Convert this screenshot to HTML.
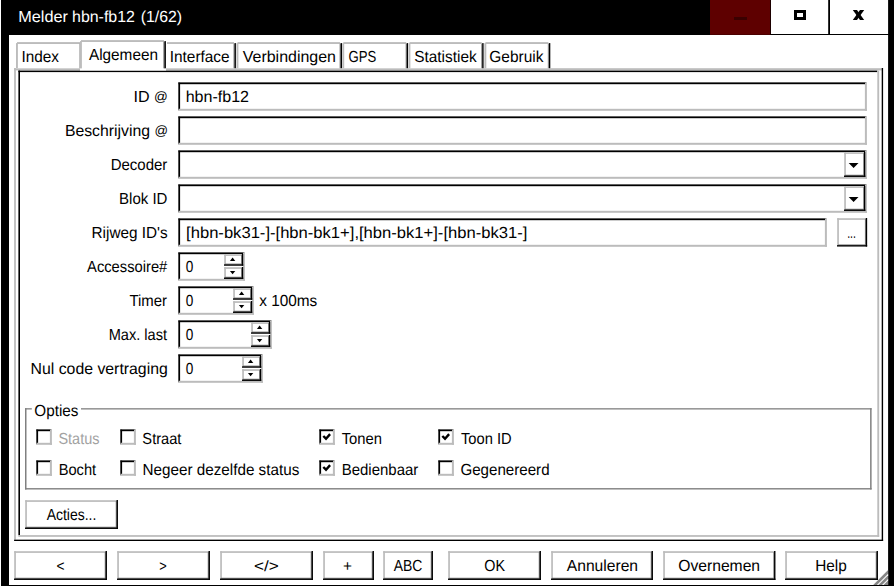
<!DOCTYPE html>
<html lang="nl"><head><meta charset="utf-8"><title>Melder hbn-fb12 (1/62)</title>
<style>html,body{margin:0;padding:0;background:#fff;overflow:hidden}body{width:894px;height:586px;font-family:'Liberation Sans', sans-serif}svg text{white-space:pre}</style>
</head><body>
<svg font-family="'Liberation Sans', sans-serif" text-rendering="geometricPrecision" width="894" height="586" viewBox="0 0 894 586" style="display:block">
<rect x="0" y="0" width="894" height="586" fill="#fff"/>
<rect x="1" y="0" width="893" height="35" fill="#000000"/>
<rect x="1" y="0" width="8" height="586" fill="#000000"/>
<rect x="888.1" y="0" width="5.9" height="586" fill="#000000"/>
<rect x="1" y="585" width="893" height="1" fill="#000000"/>
<text x="18.22" y="22" font-size="16" fill="#fff" textLength="49.73" lengthAdjust="spacingAndGlyphs">Melder</text>
<text x="72.04" y="22" font-size="16" fill="#fff" textLength="62.88" lengthAdjust="spacingAndGlyphs">hbn-fb12</text>
<text x="140.81" y="22" font-size="16" fill="#fff" textLength="41.34" lengthAdjust="spacingAndGlyphs">(1/62)</text>
<rect x="710" y="0" width="60.3" height="34.8" fill="#5e0000"/>
<rect x="734" y="17" width="13" height="3" fill="#3a0000"/>
<rect x="771" y="0" width="57.2" height="34" fill="#fff"/>
<rect x="830" y="0" width="58.1" height="34" fill="#fff"/>
<rect x="794" y="10" width="12" height="10" fill="#000000"/>
<rect x="797" y="13" width="6" height="4" fill="#fff"/>
<polygon points="852.8,10 857,10 864.2,20 860,20" fill="#000000"/>
<polygon points="860,10 864.2,10 857,20 852.8,20" fill="#000000"/>
<rect x="14.1" y="68.2" width="867.7" height="2.2" fill="#bcbcbc"/>
<rect x="14.1" y="68.2" width="1.8" height="471.5" fill="#bcbcbc"/>
<rect x="18.4" y="70.6" width="858.9" height="1.5" fill="#000000"/>
<rect x="18.4" y="70.6" width="1.6" height="464.6" fill="#000000"/>
<rect x="877.3" y="70.6" width="1.9" height="466.25" fill="#bcbcbc"/>
<rect x="18.4" y="535.1" width="860.8" height="1.75" fill="#bcbcbc"/>
<rect x="881.7" y="68" width="1.4" height="473" fill="#000000"/>
<rect x="14.1" y="539.65" width="869" height="1.35" fill="#000000"/>
<rect x="16" y="42.1" width="66" height="26.1" fill="#fff"/>
<rect x="17" y="42.1" width="63" height="1.9" fill="#bcbcbc"/>
<rect x="16" y="43.1" width="1.9" height="25.1" fill="#bcbcbc"/>
<rect x="79.4" y="43.6" width="1.4" height="24.6" fill="#9a9a9a"/>
<rect x="80.5" y="43.1" width="1.4" height="25.1" fill="#000000"/>
<text x="21.49" y="62" font-size="16" fill="#000" textLength="37.51" lengthAdjust="spacingAndGlyphs">Index</text>
<rect x="166" y="42.1" width="70" height="26.1" fill="#fff"/>
<rect x="167" y="42.1" width="67" height="1.9" fill="#bcbcbc"/>
<rect x="233.4" y="43.6" width="1.4" height="24.6" fill="#9a9a9a"/>
<rect x="234.5" y="43.1" width="1.4" height="25.1" fill="#000000"/>
<text x="169.71" y="62" font-size="16" fill="#000" textLength="59.93" lengthAdjust="spacingAndGlyphs">Interface</text>
<rect x="236.5" y="42.1" width="105.6" height="26.1" fill="#fff"/>
<rect x="237.5" y="42.1" width="102.6" height="1.9" fill="#bcbcbc"/>
<rect x="236.5" y="43.1" width="1.9" height="25.1" fill="#bcbcbc"/>
<rect x="339.5" y="43.6" width="1.4" height="24.6" fill="#9a9a9a"/>
<rect x="340.6" y="43.1" width="1.4" height="25.1" fill="#000000"/>
<text x="242.75" y="62" font-size="16" fill="#000" textLength="93.26" lengthAdjust="spacingAndGlyphs">Verbindingen</text>
<rect x="342.3" y="42.1" width="65.9" height="26.1" fill="#fff"/>
<rect x="343.3" y="42.1" width="62.9" height="1.9" fill="#bcbcbc"/>
<rect x="342.3" y="43.1" width="1.9" height="25.1" fill="#bcbcbc"/>
<rect x="405.6" y="43.6" width="1.4" height="24.6" fill="#9a9a9a"/>
<rect x="406.7" y="43.1" width="1.4" height="25.1" fill="#000000"/>
<text x="348.57" y="62" font-size="16" fill="#000" textLength="27.78" lengthAdjust="spacingAndGlyphs">GPS</text>
<rect x="408.5" y="42.1" width="75.2" height="26.1" fill="#fff"/>
<rect x="409.5" y="42.1" width="72.2" height="1.9" fill="#bcbcbc"/>
<rect x="408.5" y="43.1" width="1.9" height="25.1" fill="#bcbcbc"/>
<rect x="481.1" y="43.6" width="1.4" height="24.6" fill="#9a9a9a"/>
<rect x="482.2" y="43.1" width="1.4" height="25.1" fill="#000000"/>
<text x="414.22" y="62" font-size="16" fill="#000" textLength="62.51" lengthAdjust="spacingAndGlyphs">Statistiek</text>
<rect x="484.4" y="42.1" width="66" height="26.1" fill="#fff"/>
<rect x="485.4" y="42.1" width="63" height="1.9" fill="#bcbcbc"/>
<rect x="484.4" y="43.1" width="1.9" height="25.1" fill="#bcbcbc"/>
<rect x="547.8" y="43.6" width="1.4" height="24.6" fill="#9a9a9a"/>
<rect x="548.9" y="43.1" width="1.4" height="25.1" fill="#000000"/>
<text x="489.35" y="62" font-size="16" fill="#000" textLength="54.10" lengthAdjust="spacingAndGlyphs">Gebruik</text>
<rect x="80" y="40.1" width="86" height="30.4" fill="#fff"/>
<rect x="81" y="40.1" width="83" height="1.9" fill="#bcbcbc"/>
<rect x="80" y="41.1" width="1.9" height="27.3" fill="#bcbcbc"/>
<rect x="163.4" y="41.6" width="1.4" height="26.7" fill="#6e6e6e"/>
<rect x="164.5" y="41.1" width="1.4" height="27.2" fill="#000000"/>
<text x="88.95" y="60" font-size="16" fill="#000" textLength="69.03" lengthAdjust="spacingAndGlyphs">Algemeen</text>
<text x="133.55" y="102" font-size="16" fill="#000" textLength="34.33" lengthAdjust="spacingAndGlyphs">ID <tspan font-size="13.5" dy="-1.4">@</tspan></text>
<text x="64.90" y="136" font-size="16" fill="#000" textLength="103.10" lengthAdjust="spacingAndGlyphs">Beschrijving <tspan font-size="13.5" dy="-1.4">@</tspan></text>
<text x="110.72" y="170" font-size="16" fill="#000" textLength="56.64" lengthAdjust="spacingAndGlyphs">Decoder</text>
<text x="119.05" y="204" font-size="16" fill="#000" textLength="48.36" lengthAdjust="spacingAndGlyphs">Blok ID</text>
<text x="91.54" y="238" font-size="16" fill="#000" textLength="76.13" lengthAdjust="spacingAndGlyphs">Rijweg ID's</text>
<text x="87.07" y="272" font-size="16" fill="#000" textLength="80.21" lengthAdjust="spacingAndGlyphs">Accessoire#</text>
<text x="129.47" y="306" font-size="16" fill="#000" textLength="37.60" lengthAdjust="spacingAndGlyphs">Timer</text>
<text x="108.71" y="340" font-size="16" fill="#000" textLength="58.37" lengthAdjust="spacingAndGlyphs">Max. last</text>
<text x="30.54" y="374" font-size="16" fill="#000" textLength="137.27" lengthAdjust="spacingAndGlyphs">Nul code vertraging</text>
<rect x="178" y="82" width="689" height="29" fill="#fff"/>
<rect x="178" y="108.8" width="689" height="2" fill="#bcbcbc"/>
<rect x="864.9" y="82" width="2" height="28.8" fill="#bcbcbc"/>
<rect x="178" y="82" width="688" height="1" fill="#8a8a8a"/>
<rect x="178" y="82" width="1" height="28" fill="#8a8a8a"/>
<rect x="178.6" y="82.7" width="686.4" height="1.5" fill="#000000"/>
<rect x="178.6" y="82.7" width="1.5" height="26.1" fill="#000000"/>
<text x="185.69" y="102" font-size="16" fill="#000" textLength="63.35" lengthAdjust="spacingAndGlyphs">hbn-fb12</text>
<rect x="178" y="116" width="689" height="29" fill="#fff"/>
<rect x="178" y="142.8" width="689" height="2" fill="#bcbcbc"/>
<rect x="864.9" y="116" width="2" height="28.8" fill="#bcbcbc"/>
<rect x="178" y="116" width="688" height="1" fill="#8a8a8a"/>
<rect x="178" y="116" width="1" height="28" fill="#8a8a8a"/>
<rect x="178.6" y="116.7" width="686.4" height="1.5" fill="#000000"/>
<rect x="178.6" y="116.7" width="1.5" height="26.1" fill="#000000"/>
<rect x="178" y="150" width="689" height="29" fill="#fff"/>
<rect x="178" y="176.8" width="689" height="2" fill="#bcbcbc"/>
<rect x="864.9" y="150" width="2" height="28.8" fill="#bcbcbc"/>
<rect x="178" y="150" width="688" height="1" fill="#8a8a8a"/>
<rect x="178" y="150" width="1" height="28" fill="#8a8a8a"/>
<rect x="178.6" y="150.7" width="686.4" height="1.5" fill="#000000"/>
<rect x="178.6" y="150.7" width="1.5" height="26.1" fill="#000000"/>
<rect x="844" y="152" width="21.4" height="25" fill="#fff"/>
<rect x="844.2" y="152.2" width="20.2" height="1.7" fill="#bcbcbc"/>
<rect x="844.2" y="152.2" width="1.7" height="23.8" fill="#bcbcbc"/>
<rect x="863.1" y="153" width="1.3" height="23" fill="#8f8f8f"/>
<rect x="845" y="174.7" width="19.4" height="1.3" fill="#8f8f8f"/>
<rect x="863.95" y="152" width="1.4" height="24.95" fill="#000000"/>
<rect x="844" y="175.55" width="21.35" height="1.4" fill="#000000"/>
<polygon points="848.7,163 858.5,163 853.6,168" fill="#000000"/>
<rect x="178" y="184" width="689" height="29" fill="#fff"/>
<rect x="178" y="210.8" width="689" height="2" fill="#bcbcbc"/>
<rect x="864.9" y="184" width="2" height="28.8" fill="#bcbcbc"/>
<rect x="178" y="184" width="688" height="1" fill="#8a8a8a"/>
<rect x="178" y="184" width="1" height="28" fill="#8a8a8a"/>
<rect x="178.6" y="184.7" width="686.4" height="1.5" fill="#000000"/>
<rect x="178.6" y="184.7" width="1.5" height="26.1" fill="#000000"/>
<rect x="844" y="186" width="21.4" height="25" fill="#fff"/>
<rect x="844.2" y="186.2" width="20.2" height="1.7" fill="#bcbcbc"/>
<rect x="844.2" y="186.2" width="1.7" height="23.8" fill="#bcbcbc"/>
<rect x="863.1" y="187" width="1.3" height="23" fill="#8f8f8f"/>
<rect x="845" y="208.7" width="19.4" height="1.3" fill="#8f8f8f"/>
<rect x="863.95" y="186" width="1.4" height="24.95" fill="#000000"/>
<rect x="844" y="209.55" width="21.35" height="1.4" fill="#000000"/>
<polygon points="848.7,197 858.5,197 853.6,202" fill="#000000"/>
<rect x="178" y="218" width="649" height="29" fill="#fff"/>
<rect x="178" y="244.8" width="649" height="2" fill="#bcbcbc"/>
<rect x="824.9" y="218" width="2" height="28.8" fill="#bcbcbc"/>
<rect x="178" y="218" width="648" height="1" fill="#8a8a8a"/>
<rect x="178" y="218" width="1" height="28" fill="#8a8a8a"/>
<rect x="178.6" y="218.7" width="646.4" height="1.5" fill="#000000"/>
<rect x="178.6" y="218.7" width="1.5" height="26.1" fill="#000000"/>
<text x="186.09" y="238" font-size="16" fill="#000" textLength="341.25" lengthAdjust="spacingAndGlyphs">[hbn-bk31-]-[hbn-bk1+],[hbn-bk1+]-[hbn-bk31-]</text>
<rect x="837" y="218" width="30.2" height="28.6" fill="#fff"/>
<rect x="837.2" y="218.2" width="29" height="1.7" fill="#bcbcbc"/>
<rect x="837.2" y="218.2" width="1.7" height="27.4" fill="#bcbcbc"/>
<rect x="864.9" y="219" width="1.3" height="26.6" fill="#8f8f8f"/>
<rect x="838" y="244.3" width="28.2" height="1.3" fill="#8f8f8f"/>
<rect x="865.75" y="218" width="1.4" height="28.55" fill="#000000"/>
<rect x="837" y="245.15" width="30.15" height="1.4" fill="#000000"/>
<text x="847.14" y="237.6" font-size="16" fill="#000" textLength="8.84" lengthAdjust="spacingAndGlyphs">...</text>
<rect x="178" y="252" width="67" height="29" fill="#fff"/>
<rect x="178" y="278.8" width="67" height="2" fill="#bcbcbc"/>
<rect x="242.9" y="252" width="2" height="28.8" fill="#bcbcbc"/>
<rect x="178" y="252" width="66" height="1" fill="#8a8a8a"/>
<rect x="178" y="252" width="1" height="28" fill="#8a8a8a"/>
<rect x="178.6" y="252.7" width="64.4" height="1.5" fill="#000000"/>
<rect x="178.6" y="252.7" width="1.5" height="26.1" fill="#000000"/>
<text x="185.81" y="272" font-size="16" fill="#000" textLength="7.56" lengthAdjust="spacingAndGlyphs">0</text>
<rect x="224" y="254" width="19.3" height="11.8" fill="#fff"/>
<rect x="224.2" y="254.2" width="18.1" height="1.7" fill="#bcbcbc"/>
<rect x="224.2" y="254.2" width="1.7" height="10.6" fill="#bcbcbc"/>
<rect x="241" y="255" width="1.3" height="9.8" fill="#8f8f8f"/>
<rect x="225" y="263.5" width="17.3" height="1.3" fill="#8f8f8f"/>
<rect x="241.85" y="254" width="1.4" height="11.75" fill="#000000"/>
<rect x="224" y="264.35" width="19.25" height="1.4" fill="#000000"/>
<rect x="224" y="267" width="19.3" height="12" fill="#fff"/>
<rect x="224.2" y="267.2" width="18.1" height="1.7" fill="#bcbcbc"/>
<rect x="224.2" y="267.2" width="1.7" height="10.8" fill="#bcbcbc"/>
<rect x="241" y="268" width="1.3" height="10" fill="#8f8f8f"/>
<rect x="225" y="276.7" width="17.3" height="1.3" fill="#8f8f8f"/>
<rect x="241.85" y="267" width="1.4" height="11.95" fill="#000000"/>
<rect x="224" y="277.55" width="19.25" height="1.4" fill="#000000"/>
<polygon points="229.9,261.1 235.3,261.1 232.6,257.6" fill="#000000"/>
<polygon points="229.9,270.9 235.3,270.9 232.6,274.3" fill="#000000"/>
<rect x="178" y="286" width="76" height="29" fill="#fff"/>
<rect x="178" y="312.8" width="76" height="2" fill="#bcbcbc"/>
<rect x="251.9" y="286" width="2" height="28.8" fill="#bcbcbc"/>
<rect x="178" y="286" width="75" height="1" fill="#8a8a8a"/>
<rect x="178" y="286" width="1" height="28" fill="#8a8a8a"/>
<rect x="178.6" y="286.7" width="73.4" height="1.5" fill="#000000"/>
<rect x="178.6" y="286.7" width="1.5" height="26.1" fill="#000000"/>
<text x="185.81" y="306" font-size="16" fill="#000" textLength="7.56" lengthAdjust="spacingAndGlyphs">0</text>
<rect x="233" y="288" width="19.3" height="11.8" fill="#fff"/>
<rect x="233.2" y="288.2" width="18.1" height="1.7" fill="#bcbcbc"/>
<rect x="233.2" y="288.2" width="1.7" height="10.6" fill="#bcbcbc"/>
<rect x="250" y="289" width="1.3" height="9.8" fill="#8f8f8f"/>
<rect x="234" y="297.5" width="17.3" height="1.3" fill="#8f8f8f"/>
<rect x="250.85" y="288" width="1.4" height="11.75" fill="#000000"/>
<rect x="233" y="298.35" width="19.25" height="1.4" fill="#000000"/>
<rect x="233" y="301" width="19.3" height="12" fill="#fff"/>
<rect x="233.2" y="301.2" width="18.1" height="1.7" fill="#bcbcbc"/>
<rect x="233.2" y="301.2" width="1.7" height="10.8" fill="#bcbcbc"/>
<rect x="250" y="302" width="1.3" height="10" fill="#8f8f8f"/>
<rect x="234" y="310.7" width="17.3" height="1.3" fill="#8f8f8f"/>
<rect x="250.85" y="301" width="1.4" height="11.95" fill="#000000"/>
<rect x="233" y="311.55" width="19.25" height="1.4" fill="#000000"/>
<polygon points="238.9,295.1 244.3,295.1 241.6,291.6" fill="#000000"/>
<polygon points="238.9,304.9 244.3,304.9 241.6,308.3" fill="#000000"/>
<rect x="178" y="320" width="94" height="29" fill="#fff"/>
<rect x="178" y="346.8" width="94" height="2" fill="#bcbcbc"/>
<rect x="269.9" y="320" width="2" height="28.8" fill="#bcbcbc"/>
<rect x="178" y="320" width="93" height="1" fill="#8a8a8a"/>
<rect x="178" y="320" width="1" height="28" fill="#8a8a8a"/>
<rect x="178.6" y="320.7" width="91.4" height="1.5" fill="#000000"/>
<rect x="178.6" y="320.7" width="1.5" height="26.1" fill="#000000"/>
<text x="185.81" y="340" font-size="16" fill="#000" textLength="7.56" lengthAdjust="spacingAndGlyphs">0</text>
<rect x="251" y="322" width="19.3" height="11.8" fill="#fff"/>
<rect x="251.2" y="322.2" width="18.1" height="1.7" fill="#bcbcbc"/>
<rect x="251.2" y="322.2" width="1.7" height="10.6" fill="#bcbcbc"/>
<rect x="268" y="323" width="1.3" height="9.8" fill="#8f8f8f"/>
<rect x="252" y="331.5" width="17.3" height="1.3" fill="#8f8f8f"/>
<rect x="268.85" y="322" width="1.4" height="11.75" fill="#000000"/>
<rect x="251" y="332.35" width="19.25" height="1.4" fill="#000000"/>
<rect x="251" y="335" width="19.3" height="12" fill="#fff"/>
<rect x="251.2" y="335.2" width="18.1" height="1.7" fill="#bcbcbc"/>
<rect x="251.2" y="335.2" width="1.7" height="10.8" fill="#bcbcbc"/>
<rect x="268" y="336" width="1.3" height="10" fill="#8f8f8f"/>
<rect x="252" y="344.7" width="17.3" height="1.3" fill="#8f8f8f"/>
<rect x="268.85" y="335" width="1.4" height="11.95" fill="#000000"/>
<rect x="251" y="345.55" width="19.25" height="1.4" fill="#000000"/>
<polygon points="256.9,329.1 262.3,329.1 259.6,325.6" fill="#000000"/>
<polygon points="256.9,338.9 262.3,338.9 259.6,342.3" fill="#000000"/>
<rect x="178" y="354" width="85" height="29" fill="#fff"/>
<rect x="178" y="380.8" width="85" height="2" fill="#bcbcbc"/>
<rect x="260.9" y="354" width="2" height="28.8" fill="#bcbcbc"/>
<rect x="178" y="354" width="84" height="1" fill="#8a8a8a"/>
<rect x="178" y="354" width="1" height="28" fill="#8a8a8a"/>
<rect x="178.6" y="354.7" width="82.4" height="1.5" fill="#000000"/>
<rect x="178.6" y="354.7" width="1.5" height="26.1" fill="#000000"/>
<text x="185.81" y="374" font-size="16" fill="#000" textLength="7.56" lengthAdjust="spacingAndGlyphs">0</text>
<rect x="242" y="356" width="19.3" height="11.8" fill="#fff"/>
<rect x="242.2" y="356.2" width="18.1" height="1.7" fill="#bcbcbc"/>
<rect x="242.2" y="356.2" width="1.7" height="10.6" fill="#bcbcbc"/>
<rect x="259" y="357" width="1.3" height="9.8" fill="#8f8f8f"/>
<rect x="243" y="365.5" width="17.3" height="1.3" fill="#8f8f8f"/>
<rect x="259.85" y="356" width="1.4" height="11.75" fill="#000000"/>
<rect x="242" y="366.35" width="19.25" height="1.4" fill="#000000"/>
<rect x="242" y="369" width="19.3" height="12" fill="#fff"/>
<rect x="242.2" y="369.2" width="18.1" height="1.7" fill="#bcbcbc"/>
<rect x="242.2" y="369.2" width="1.7" height="10.8" fill="#bcbcbc"/>
<rect x="259" y="370" width="1.3" height="10" fill="#8f8f8f"/>
<rect x="243" y="378.7" width="17.3" height="1.3" fill="#8f8f8f"/>
<rect x="259.85" y="369" width="1.4" height="11.95" fill="#000000"/>
<rect x="242" y="379.55" width="19.25" height="1.4" fill="#000000"/>
<polygon points="247.9,363.1 253.3,363.1 250.6,359.6" fill="#000000"/>
<polygon points="247.9,372.9 253.3,372.9 250.6,376.3" fill="#000000"/>
<text x="259.19" y="306" font-size="16" fill="#000" textLength="58.06" lengthAdjust="spacingAndGlyphs">x 100ms</text>
<rect x="25" y="408.2" width="6.8" height="1.3" fill="#808080"/>
<rect x="81" y="408.2" width="790.6" height="1.3" fill="#808080"/>
<rect x="25" y="408.2" width="1.5" height="81.3" fill="#808080"/>
<rect x="870.1" y="408.2" width="1.5" height="81.3" fill="#808080"/>
<rect x="25" y="488.1" width="846.6" height="1.4" fill="#808080"/>
<text x="34.36" y="416" font-size="16" fill="#000" textLength="44.11" lengthAdjust="spacingAndGlyphs">Opties</text>
<rect x="36" y="429" width="16" height="16" fill="#fff"/>
<rect x="36" y="442.8" width="16" height="2" fill="#bcbcbc"/>
<rect x="49.9" y="429" width="2" height="15.8" fill="#bcbcbc"/>
<rect x="36" y="429" width="15" height="1" fill="#8a8a8a"/>
<rect x="36" y="429" width="1" height="15" fill="#8a8a8a"/>
<rect x="36.6" y="429.7" width="13.4" height="1.5" fill="#000000"/>
<rect x="36.6" y="429.7" width="1.5" height="13.1" fill="#000000"/>
<text x="58.43" y="444" font-size="16" fill="#a2a2a2" textLength="41.08" lengthAdjust="spacingAndGlyphs">Status</text>
<rect x="120" y="429" width="16" height="16" fill="#fff"/>
<rect x="120" y="442.8" width="16" height="2" fill="#bcbcbc"/>
<rect x="133.9" y="429" width="2" height="15.8" fill="#bcbcbc"/>
<rect x="120" y="429" width="15" height="1" fill="#8a8a8a"/>
<rect x="120" y="429" width="1" height="15" fill="#8a8a8a"/>
<rect x="120.6" y="429.7" width="13.4" height="1.5" fill="#000000"/>
<rect x="120.6" y="429.7" width="1.5" height="13.1" fill="#000000"/>
<text x="142.37" y="444" font-size="16" fill="#000" textLength="39.07" lengthAdjust="spacingAndGlyphs">Straat</text>
<rect x="319" y="429" width="16" height="16" fill="#fff"/>
<rect x="319" y="442.8" width="16" height="2" fill="#bcbcbc"/>
<rect x="332.9" y="429" width="2" height="15.8" fill="#bcbcbc"/>
<rect x="319" y="429" width="15" height="1" fill="#8a8a8a"/>
<rect x="319" y="429" width="1" height="15" fill="#8a8a8a"/>
<rect x="319.6" y="429.7" width="13.4" height="1.5" fill="#000000"/>
<rect x="319.6" y="429.7" width="1.5" height="13.1" fill="#000000"/>
<path d="M323.3 436 L326 438.7 L330.1 434.1" stroke="#000" stroke-width="2.4" fill="none" stroke-linejoin="miter"/>
<text x="341.66" y="444" font-size="16" fill="#000" textLength="40.28" lengthAdjust="spacingAndGlyphs">Tonen</text>
<rect x="438" y="429" width="16" height="16" fill="#fff"/>
<rect x="438" y="442.8" width="16" height="2" fill="#bcbcbc"/>
<rect x="451.9" y="429" width="2" height="15.8" fill="#bcbcbc"/>
<rect x="438" y="429" width="15" height="1" fill="#8a8a8a"/>
<rect x="438" y="429" width="1" height="15" fill="#8a8a8a"/>
<rect x="438.6" y="429.7" width="13.4" height="1.5" fill="#000000"/>
<rect x="438.6" y="429.7" width="1.5" height="13.1" fill="#000000"/>
<path d="M442.3 436 L445 438.7 L449.1 434.1" stroke="#000" stroke-width="2.4" fill="none" stroke-linejoin="miter"/>
<text x="460.97" y="444" font-size="16" fill="#000" textLength="50.64" lengthAdjust="spacingAndGlyphs">Toon ID</text>
<rect x="36" y="460" width="16" height="16" fill="#fff"/>
<rect x="36" y="473.8" width="16" height="2" fill="#bcbcbc"/>
<rect x="49.9" y="460" width="2" height="15.8" fill="#bcbcbc"/>
<rect x="36" y="460" width="15" height="1" fill="#8a8a8a"/>
<rect x="36" y="460" width="1" height="15" fill="#8a8a8a"/>
<rect x="36.6" y="460.7" width="13.4" height="1.5" fill="#000000"/>
<rect x="36.6" y="460.7" width="1.5" height="13.1" fill="#000000"/>
<text x="58.71" y="475" font-size="16" fill="#000" textLength="37.39" lengthAdjust="spacingAndGlyphs">Bocht</text>
<rect x="120" y="460" width="16" height="16" fill="#fff"/>
<rect x="120" y="473.8" width="16" height="2" fill="#bcbcbc"/>
<rect x="133.9" y="460" width="2" height="15.8" fill="#bcbcbc"/>
<rect x="120" y="460" width="15" height="1" fill="#8a8a8a"/>
<rect x="120" y="460" width="1" height="15" fill="#8a8a8a"/>
<rect x="120.6" y="460.7" width="13.4" height="1.5" fill="#000000"/>
<rect x="120.6" y="460.7" width="1.5" height="13.1" fill="#000000"/>
<text x="142.49" y="475" font-size="16" fill="#000" textLength="156.81" lengthAdjust="spacingAndGlyphs">Negeer dezelfde status</text>
<rect x="319" y="460" width="16" height="16" fill="#fff"/>
<rect x="319" y="473.8" width="16" height="2" fill="#bcbcbc"/>
<rect x="332.9" y="460" width="2" height="15.8" fill="#bcbcbc"/>
<rect x="319" y="460" width="15" height="1" fill="#8a8a8a"/>
<rect x="319" y="460" width="1" height="15" fill="#8a8a8a"/>
<rect x="319.6" y="460.7" width="13.4" height="1.5" fill="#000000"/>
<rect x="319.6" y="460.7" width="1.5" height="13.1" fill="#000000"/>
<path d="M323.3 467 L326 469.7 L330.1 465.1" stroke="#000" stroke-width="2.4" fill="none" stroke-linejoin="miter"/>
<text x="341.76" y="475" font-size="16" fill="#000" textLength="76.49" lengthAdjust="spacingAndGlyphs">Bedienbaar</text>
<rect x="438" y="460" width="16" height="16" fill="#fff"/>
<rect x="438" y="473.8" width="16" height="2" fill="#bcbcbc"/>
<rect x="451.9" y="460" width="2" height="15.8" fill="#bcbcbc"/>
<rect x="438" y="460" width="15" height="1" fill="#8a8a8a"/>
<rect x="438" y="460" width="1" height="15" fill="#8a8a8a"/>
<rect x="438.6" y="460.7" width="13.4" height="1.5" fill="#000000"/>
<rect x="438.6" y="460.7" width="1.5" height="13.1" fill="#000000"/>
<text x="460.45" y="475" font-size="16" fill="#000" textLength="89.12" lengthAdjust="spacingAndGlyphs">Gegenereerd</text>
<rect x="25" y="500" width="93" height="29" fill="#fff"/>
<rect x="25.2" y="500.2" width="91.8" height="1.7" fill="#bcbcbc"/>
<rect x="25.2" y="500.2" width="1.7" height="27.8" fill="#bcbcbc"/>
<rect x="115.7" y="501" width="1.3" height="27" fill="#8f8f8f"/>
<rect x="26" y="526.7" width="91" height="1.3" fill="#8f8f8f"/>
<rect x="116.55" y="500" width="1.4" height="28.95" fill="#000000"/>
<rect x="25" y="527.55" width="92.95" height="1.4" fill="#000000"/>
<text x="46.65" y="520" font-size="16" fill="#000" textLength="49.72" lengthAdjust="spacingAndGlyphs">Acties...</text>
<rect x="14" y="551" width="93" height="29" fill="#fff"/>
<rect x="14.2" y="551.2" width="91.8" height="1.7" fill="#bcbcbc"/>
<rect x="14.2" y="551.2" width="1.7" height="27.8" fill="#bcbcbc"/>
<rect x="104.7" y="552" width="1.3" height="27" fill="#8f8f8f"/>
<rect x="15" y="577.7" width="91" height="1.3" fill="#8f8f8f"/>
<rect x="105.55" y="551" width="1.4" height="28.95" fill="#000000"/>
<rect x="14" y="578.55" width="92.95" height="1.4" fill="#000000"/>
<text x="56.49" y="571.2" font-size="15" fill="#000" textLength="8.04" lengthAdjust="spacingAndGlyphs">&lt;</text>
<rect x="117" y="551" width="93" height="29" fill="#fff"/>
<rect x="117.2" y="551.2" width="91.8" height="1.7" fill="#bcbcbc"/>
<rect x="117.2" y="551.2" width="1.7" height="27.8" fill="#bcbcbc"/>
<rect x="207.7" y="552" width="1.3" height="27" fill="#8f8f8f"/>
<rect x="118" y="577.7" width="91" height="1.3" fill="#8f8f8f"/>
<rect x="208.55" y="551" width="1.4" height="28.95" fill="#000000"/>
<rect x="117" y="578.55" width="92.95" height="1.4" fill="#000000"/>
<text x="159.34" y="571.2" font-size="15" fill="#000" textLength="7.48" lengthAdjust="spacingAndGlyphs">&gt;</text>
<rect x="220" y="551" width="93" height="29" fill="#fff"/>
<rect x="220.2" y="551.2" width="91.8" height="1.7" fill="#bcbcbc"/>
<rect x="220.2" y="551.2" width="1.7" height="27.8" fill="#bcbcbc"/>
<rect x="310.7" y="552" width="1.3" height="27" fill="#8f8f8f"/>
<rect x="221" y="577.7" width="91" height="1.3" fill="#8f8f8f"/>
<rect x="311.55" y="551" width="1.4" height="28.95" fill="#000000"/>
<rect x="220" y="578.55" width="92.95" height="1.4" fill="#000000"/>
<text x="254.07" y="571" font-size="15" fill="#000" textLength="24.75" lengthAdjust="spacingAndGlyphs">&lt;/&gt;</text>
<rect x="323" y="551" width="51" height="29" fill="#fff"/>
<rect x="323.2" y="551.2" width="49.8" height="1.7" fill="#bcbcbc"/>
<rect x="323.2" y="551.2" width="1.7" height="27.8" fill="#bcbcbc"/>
<rect x="371.7" y="552" width="1.3" height="27" fill="#8f8f8f"/>
<rect x="324" y="577.7" width="49" height="1.3" fill="#8f8f8f"/>
<rect x="372.55" y="551" width="1.4" height="28.95" fill="#000000"/>
<rect x="323" y="578.55" width="50.95" height="1.4" fill="#000000"/>
<text x="342.90" y="571.2" font-size="15" fill="#000" textLength="8.97" lengthAdjust="spacingAndGlyphs">+</text>
<rect x="383" y="551" width="50" height="29" fill="#fff"/>
<rect x="383.2" y="551.2" width="48.8" height="1.7" fill="#bcbcbc"/>
<rect x="383.2" y="551.2" width="1.7" height="27.8" fill="#bcbcbc"/>
<rect x="430.7" y="552" width="1.3" height="27" fill="#8f8f8f"/>
<rect x="384" y="577.7" width="48" height="1.3" fill="#8f8f8f"/>
<rect x="431.55" y="551" width="1.4" height="28.95" fill="#000000"/>
<rect x="383" y="578.55" width="49.95" height="1.4" fill="#000000"/>
<text x="393.81" y="571" font-size="16" fill="#000" textLength="28.62" lengthAdjust="spacingAndGlyphs">ABC</text>
<rect x="448" y="551" width="93" height="29" fill="#fff"/>
<rect x="448.2" y="551.2" width="91.8" height="1.7" fill="#bcbcbc"/>
<rect x="448.2" y="551.2" width="1.7" height="27.8" fill="#bcbcbc"/>
<rect x="538.7" y="552" width="1.3" height="27" fill="#8f8f8f"/>
<rect x="449" y="577.7" width="91" height="1.3" fill="#8f8f8f"/>
<rect x="539.55" y="551" width="1.4" height="28.95" fill="#000000"/>
<rect x="448" y="578.55" width="92.95" height="1.4" fill="#000000"/>
<text x="484.37" y="571" font-size="16" fill="#000" textLength="20.73" lengthAdjust="spacingAndGlyphs">OK</text>
<rect x="551" y="551" width="102" height="29" fill="#fff"/>
<rect x="551.2" y="551.2" width="100.8" height="1.7" fill="#bcbcbc"/>
<rect x="551.2" y="551.2" width="1.7" height="27.8" fill="#bcbcbc"/>
<rect x="650.7" y="552" width="1.3" height="27" fill="#8f8f8f"/>
<rect x="552" y="577.7" width="100" height="1.3" fill="#8f8f8f"/>
<rect x="651.55" y="551" width="1.4" height="28.95" fill="#000000"/>
<rect x="551" y="578.55" width="101.95" height="1.4" fill="#000000"/>
<text x="566.78" y="571" font-size="16" fill="#000" textLength="71.26" lengthAdjust="spacingAndGlyphs">Annuleren</text>
<rect x="663" y="551" width="112.5" height="29" fill="#fff"/>
<rect x="663.2" y="551.2" width="111.3" height="1.7" fill="#bcbcbc"/>
<rect x="663.2" y="551.2" width="1.7" height="27.8" fill="#bcbcbc"/>
<rect x="773.2" y="552" width="1.3" height="27" fill="#8f8f8f"/>
<rect x="664" y="577.7" width="110.5" height="1.3" fill="#8f8f8f"/>
<rect x="774.05" y="551" width="1.4" height="28.95" fill="#000000"/>
<rect x="663" y="578.55" width="112.45" height="1.4" fill="#000000"/>
<text x="678.23" y="571" font-size="16" fill="#000" textLength="81.87" lengthAdjust="spacingAndGlyphs">Overnemen</text>
<rect x="785" y="551" width="93" height="29" fill="#fff"/>
<rect x="785.2" y="551.2" width="91.8" height="1.7" fill="#bcbcbc"/>
<rect x="785.2" y="551.2" width="1.7" height="27.8" fill="#bcbcbc"/>
<rect x="875.7" y="552" width="1.3" height="27" fill="#8f8f8f"/>
<rect x="786" y="577.7" width="91" height="1.3" fill="#8f8f8f"/>
<rect x="876.55" y="551" width="1.4" height="28.95" fill="#000000"/>
<rect x="785" y="578.55" width="92.95" height="1.4" fill="#000000"/>
<text x="815.15" y="571" font-size="16" fill="#000" textLength="31.58" lengthAdjust="spacingAndGlyphs">Help</text>
<polygon points="873.2,585 888.1,570 888.1,585" fill="#868686"/>
<polygon points="876.9,585 888.1,573.8 888.1,575.3 878.4,585" fill="#fff"/>
<polygon points="882,585 888.1,578.9 888.1,580.4 883.5,585" fill="#fff"/>
</svg>
</body></html>
